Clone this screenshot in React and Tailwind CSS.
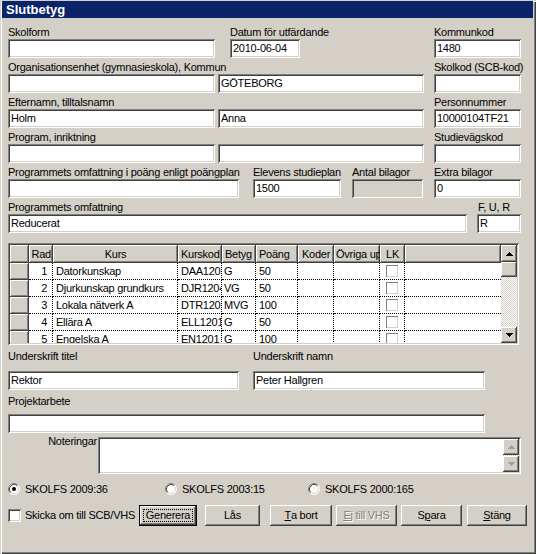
import React from "react";

const SUNKEN =
  "shadow-[inset_1px_1px_0_#808080,inset_-1px_-1px_0_#ffffff,inset_2px_2px_0_#404040,inset_-2px_-2px_0_#d4d0c8]";
const RAISED =
  "shadow-[inset_-1px_-1px_0_#404040,inset_1px_1px_0_#ffffff,inset_-2px_-2px_0_#808080,inset_2px_2px_0_#d4d0c8]";
const HEAD =
  "shadow-[inset_-1px_-1px_0_#404040,inset_1px_1px_0_#ffffff,inset_-2px_-2px_0_#808080]";

function Label({ children, className = "" }) {
  return <div className={`h-[13px] whitespace-nowrap leading-[13px] ${className}`}>{children}</div>;
}

function Input({ value, className = "", disabled = false }) {
  return (
    <div
      className={`h-[19px] overflow-hidden whitespace-nowrap pl-[3px] leading-[19px] ${
        disabled ? "bg-[#d4d0c8]" : "bg-white"
      } ${SUNKEN} ${className}`}
    >
      {value}
    </div>
  );
}

function Field({ label, value, className = "", disabled = false, labelClass = "" }) {
  return (
    <div className={`flex flex-col ${className}`}>
      <Label className={labelClass}>{label}</Label>
      <Input value={value} disabled={disabled} />
    </div>
  );
}

function PairRow({ label, a, b, rightLabel, rightValue }) {
  return (
    <div className="flex">
      <div className="flex w-[416px] flex-col">
        <Label>{label}</Label>
        <div className="flex gap-[3px]">
          <Input className="w-[207px]" value={a} />
          <Input className="w-[206px]" value={b} />
        </div>
      </div>
      <Field className="ml-[10px] w-[87px]" label={rightLabel} value={rightValue} />
    </div>
  );
}

function Arrow({ down = false, color = "#000000" }) {
  return (
    <svg width="7" height="4" viewBox="0 0 7 4" shapeRendering="crispEdges">
      {down ? (
        <path d="M0 0h7v1H0zM1 1h5v1H1zM2 2h3v1H2zM3 3h1v1H3z" fill={color} />
      ) : (
        <path d="M3 0h1v1H3zM2 1h3v1H2zM1 2h5v1H1zM0 3h7v1H0z" fill={color} />
      )}
    </svg>
  );
}

function ScrollButton({ down = false, className = "", color }) {
  return (
    <div className={`flex items-center justify-center bg-[#d4d0c8] ${RAISED} ${className}`}>
      <Arrow down={down} color={color} />
    </div>
  );
}

function Radio({ checked = false }) {
  return (
    <svg width="12" height="12" viewBox="0 0 12 12" className="shrink-0">
      <circle cx="6" cy="6" r="5.5" fill="#ffffff" />
      <path d="M2.11 9.89 A5.5 5.5 0 0 1 9.89 2.11" stroke="#808080" strokeWidth="1" fill="none" />
      <path d="M9.89 2.11 A5.5 5.5 0 0 1 2.11 9.89" stroke="#ffffff" strokeWidth="1" fill="none" />
      <path d="M2.82 9.18 A4.5 4.5 0 0 1 9.18 2.82" stroke="#404040" strokeWidth="1" fill="none" />
      <path d="M9.18 2.82 A4.5 4.5 0 0 1 2.82 9.18" stroke="#d4d0c8" strokeWidth="1" fill="none" />
      {checked ? <circle cx="6" cy="6" r="2" fill="#000000" /> : null}
    </svg>
  );
}

function Button({ children, className = "", disabled = false }) {
  return (
    <div
      className={`flex h-[21px] items-center justify-center bg-[#d4d0c8] ${RAISED} ${
        disabled ? "text-[#808080] [text-shadow:1px_1px_0_#ffffff]" : ""
      } ${className}`}
    >
      {children}
    </div>
  );
}

const columns = [
  { title: "Rad", w: "w-[24px]", head: "justify-end pr-[2px]", cell: "justify-end pr-[5px]" },
  { title: "Kurs", w: "w-[125px]", head: "justify-center", cell: "pl-[3px]" },
  { title: "Kurskod", w: "w-[44px]", head: "pl-[3px]", cell: "pl-[3px]" },
  { title: "Betyg", w: "w-[34px]", head: "pl-[3px]", cell: "pl-[2px]" },
  { title: "Poäng", w: "w-[42px]", head: "pl-[3px]", cell: "pl-[3px]" },
  { title: "Koder", w: "w-[36px]", head: "pl-[4px]", cell: "pl-[3px]" },
  { title: "Övriga uppgifter", w: "w-[46px]", head: "pl-[2px]", cell: "pl-[3px]" },
  { title: "LK", w: "w-[25px]", head: "justify-center", cell: "justify-center" },
];

const rows = [
  ["1", "Datorkunskap", "DAA1201", "G", "50"],
  ["2", "Djurkunskap grundkurs", "DJR1204", "VG", "50"],
  ["3", "Lokala nätverk A", "DTR1201", "MVG", "100"],
  ["4", "Ellära A", "ELL1201", "G", "50"],
  ["5", "Engelska A", "EN1201", "G", "100"],
];

function CourseGrid() {
  return (
    <div className={`mt-[10px] flex h-[102px] w-[511px] p-[2px] ${SUNKEN}`}>
      <div className="flex min-w-0 flex-1 flex-col overflow-hidden bg-white">
        <div className="flex h-[18px] shrink-0">
          <div className={`w-[19px] shrink-0 bg-[#d4d0c8] ${HEAD}`} />
          {columns.map((c) => (
            <div
              key={c.title}
              className={`flex shrink-0 items-center overflow-hidden whitespace-nowrap bg-[#d4d0c8] ${HEAD} ${c.w} ${c.head}`}
            >
              {c.title}
            </div>
          ))}
          <div className={`flex-1 bg-[#d4d0c8] ${HEAD}`} />
        </div>
        {rows.map((r) => (
          <div key={r[0]} className="flex h-[17px] shrink-0">
            <div className={`w-[19px] shrink-0 bg-[#d4d0c8] ${HEAD}`} />
            {columns.map((c, i) => (
              <div
                key={c.title}
                className={`flex shrink-0 items-center overflow-hidden whitespace-nowrap border-r border-b border-dotted border-black ${c.w} ${c.cell}`}
              >
                {i === 7 ? (
                  <div className="h-[12px] w-[12px] shadow-[inset_1px_1px_0_#808080,inset_-1px_-1px_0_#d4d0c8]" />
                ) : (
                  r[i] || ""
                )}
              </div>
            ))}
            <div className="flex-1 border-b border-dotted border-black" />
          </div>
        ))}
      </div>
      <div className="flex w-[16px] shrink-0 flex-col">
        <ScrollButton className="h-[17px]" />
        <div className={`h-[15px] bg-[#d4d0c8] ${RAISED}`} />
        <div className="flex-1 bg-[repeating-conic-gradient(#ffffff_0%_25%,#d4d0c8_0%_50%)] bg-[length:2px_2px]" />
        <ScrollButton down className="h-[16px]" />
      </div>
    </div>
  );
}

export default function App() {
  return (
    <div className="h-[554px] w-[536px] bg-[#d4d0c8] pt-[1px] pr-[3px] pl-[2px] font-['Liberation_Sans',Arial,sans-serif] text-[11px] tracking-[-0.25px] text-black shadow-[inset_1px_1px_0_#d4d0c8,inset_2px_2px_0_#ffffff,inset_-1px_-1px_0_#404040,inset_-2px_-2px_0_#808080]">
      <div className="flex h-[17px] items-center bg-[#0a246a] pl-[4px] text-[13px] font-bold tracking-normal text-white">
        Slutbetyg
      </div>

      <div className="flex flex-col pt-[8px] pl-[6px]">
        <div className="flex flex-col gap-[3px]">
          <div className="flex">
            <Field className="w-[207px]" label="Skolform" />
            <Field className="ml-[15px] w-[70px]" label="Datum för utfärdande" value="2010-06-04" />
            <Field className="ml-[134px] w-[87px]" label="Kommunkod" value="1480" />
          </div>
          <PairRow
            label="Organisationsenhet (gymnasieskola), Kommun"
            b="GÖTEBORG"
            rightLabel="Skolkod (SCB-kod)"
          />
          <PairRow
            label="Efternamn, tilltalsnamn"
            a="Holm"
            b="Anna"
            rightLabel="Personnummer"
            rightValue="10000104TF21"
          />
          <PairRow label="Program, inriktning" rightLabel="Studievägskod" />
          <div className="flex">
            <Field className="w-[231px]" label="Programmets omfattning i poäng enligt poängplan" />
            <Field className="ml-[14px] w-[88px]" label="Elevens studieplan" value="1500" />
            <Field className="ml-[11px] w-[71px]" label="Antal bilagor" disabled />
            <Field className="ml-[11px] w-[87px]" label="Extra bilagor" value="0" />
          </div>
          <div className="flex">
            <Field className="w-[459px]" label="Programmets omfattning" value="Reducerat" />
            <Field className="ml-[10px] w-[44px]" label="F, U, R" value="R" labelClass="pl-[1px]" />
          </div>
        </div>

        <CourseGrid />

        <div className="mt-[5px] flex">
          <div className="flex w-[231px] flex-col">
            <Label>Underskrift titel</Label>
            <Input className="mt-[8px] h-[17px] leading-[17px]" value="Rektor" />
          </div>
          <div className="ml-[14px] flex w-[232px] flex-col">
            <Label>Underskrift namn</Label>
            <Input className="mt-[8px] h-[17px] leading-[17px]" value="Peter Hallgren" />
          </div>
        </div>

        <div className="mt-[5px] flex w-[477px] flex-col">
          <Label>Projektarbete</Label>
          <Input className="mt-[6px] h-[17px] leading-[17px]" />
        </div>

        <div className="mt-[4px] flex">
          <div className="-mt-[2px] w-[90px] pr-[1px] text-right leading-[13px]">Noteringar</div>
          <div className={`flex h-[37px] w-[423px] justify-end bg-white p-[2px] ${SUNKEN}`}>
            <div className="flex w-[16px] flex-col">
              <ScrollButton className="h-[16px]" color="#a0a0a0" />
              <div className="flex-1 bg-[repeating-conic-gradient(#ffffff_0%_25%,#d4d0c8_0%_50%)] bg-[length:2px_2px]" />
              <ScrollButton down className="h-[16px]" color="#a0a0a0" />
            </div>
          </div>
        </div>

        <div className="mt-[9px] flex h-[12px] items-center">
          <div className="flex w-[157px] items-center">
            <Radio checked />
            <span className="ml-[5px]">SKOLFS 2009:36</span>
          </div>
          <div className="flex w-[143px] items-center">
            <Radio />
            <span className="ml-[5px]">SKOLFS 2003:15</span>
          </div>
          <div className="flex items-center">
            <Radio />
            <span className="ml-[5px]">SKOLFS 2000:165</span>
          </div>
        </div>

        <div className="mt-[10px] flex h-[21px] items-center">
          <div className={`h-[13px] w-[13px] shrink-0 bg-white ${SUNKEN}`} />
          <span className="ml-[4px] w-[114px] whitespace-nowrap">Skicka om till SCB/VHS</span>
          <div className="h-[21px] w-[58px] border border-black">
            <div className={`flex h-full items-center justify-center bg-[#d4d0c8] p-[3px] ${RAISED}`}>
              <div className="flex h-full w-full items-center justify-center border border-dotted border-black">
                Generera
              </div>
            </div>
          </div>
          <Button className="ml-[8px] w-[55px]">Lås</Button>
          <Button className="ml-[10px] w-[62px]">
            <span className="underline">T</span>a bort
          </Button>
          <Button className="ml-[4px] w-[61px]" disabled>
            <span className="underline">E</span>j till VHS
          </Button>
          <Button className="ml-[4px] w-[61px]">
            S<span className="underline">p</span>ara
          </Button>
          <Button className="ml-[5px] w-[60px]">
            <span className="underline">S</span>täng
          </Button>
        </div>
      </div>
    </div>
  );
}
